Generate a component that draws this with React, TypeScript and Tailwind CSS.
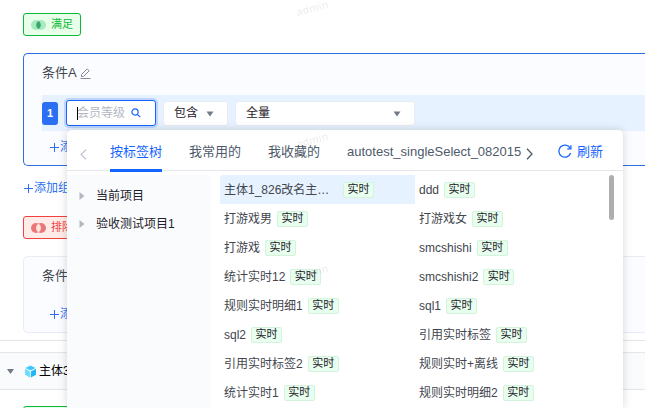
import React from "react";

type Tag = { name: string; wide?: boolean };

const TAGS: Tag[] = [
  { name: "主体1_826改名主…", wide: true },
  { name: "ddd" },
  { name: "打游戏男" },
  { name: "打游戏女" },
  { name: "打游戏" },
  { name: "smcshishi" },
  { name: "统计实时12" },
  { name: "smcshishi2" },
  { name: "规则实时明细1" },
  { name: "sql1" },
  { name: "sql2" },
  { name: "引用实时标签" },
  { name: "引用实时标签2" },
  { name: "规则实时+离线" },
  { name: "统计实时1" },
  { name: "规则实时明细2" },
];

const TABS = ["按标签树", "我常用的", "我收藏的", "autotest_singleSelect_082015"];

function MatchBadge() {
  return (
    <div className="flex h-[23px] w-[58px] items-center gap-[5px] rounded-[3px] border border-[#0cb837] bg-[#e8ffea] pl-[7px] text-[11px] leading-none text-[#0cb837]">
      <svg width="15" height="10" viewBox="0 0 15 10" aria-hidden="true">
        <circle cx="5" cy="5" r="5" fill="#a5ebbd" />
        <circle cx="10" cy="5" r="5" fill="#a5ebbd" />
        <path d="M7.5 0.9a4.8 4.8 0 0 1 0 8.2a4.8 4.8 0 0 1 0-8.2z" fill="#3aa66d" />
      </svg>
      满足
    </div>
  );
}

function ExcludeBadge() {
  return (
    <div className="flex h-[23px] w-[58px] items-center gap-[5px] rounded-[3px] border border-[#f53f3f] bg-[#ffece8] pl-[7px] text-[11px] leading-none text-[#f53f3f]">
      <svg width="15" height="10" viewBox="0 0 15 10" aria-hidden="true">
        <circle cx="5" cy="5" r="5" fill="#ea7878" />
        <circle cx="10" cy="5" r="5" fill="#ea7878" />
        <path d="M7.5 0.7a5 5 0 0 1 0 8.6a5 5 0 0 1 0-8.6z" fill="#ffe3df" />
      </svg>
      排除
    </div>
  );
}

function PlusIcon() {
  return (
    <svg width="11" height="11" viewBox="0 0 11 11" fill="none" stroke="currentColor" aria-hidden="true">
      <path d="M5.5 1v9M1 5.5h9" />
    </svg>
  );
}

function AddButton({ children }: { children: React.ReactNode }) {
  return (
    <button type="button" className="flex h-5 items-center text-xs text-[#2b6ff2]">
      <PlusIcon />
      {children}
    </button>
  );
}

function EditIcon() {
  return (
    <svg width="11" height="11" viewBox="0 0 11 11" fill="none" stroke="#868c99" aria-hidden="true">
      <path d="M0.5 10.5h10" />
      <path d="M1.5 8.5v-2l5.7-5.7l2 2l-5.7 5.7z" strokeLinejoin="round" />
    </svg>
  );
}

function Picker({ label, value, className }: { label: string; value: string; className: string }) {
  return (
    <div className={`relative ${className}`}>
      <select
        aria-label={label}
        defaultValue={value}
        className="h-[25px] w-full appearance-none rounded-[3px] border border-[#e8ebf2] bg-white pl-2.5 text-xs leading-[23px] text-[#1d2129] outline-none"
      >
        <option>{value}</option>
      </select>
      <svg className="pointer-events-none absolute top-[10px] right-[14px]" width="8" height="6" viewBox="0 0 8 6" aria-hidden="true">
        <path d="M0.5 0.5h7L4 5.5z" fill="#737a87" />
      </svg>
    </div>
  );
}

function TreeNode({ children }: { children: React.ReactNode }) {
  return (
    <button type="button" className="flex h-7 w-full items-center gap-[11px] pl-3 text-xs text-[#1d2129]">
      <svg width="6" height="8" viewBox="0 0 6 8" aria-hidden="true">
        <path d="M0.5 0l5 4l-5 4z" fill="#b3b8c2" />
      </svg>
      {children}
    </button>
  );
}

function TagPanel() {
  return (
    <section className="absolute top-[130px] right-[22px] bottom-0 left-[67px] flex flex-col rounded-t-[5px] bg-white shadow-[0_0_10px_rgba(0,0,0,0.16)]">
      <div className="flex h-[41px] items-center border-b border-[#e5e6eb] text-[13px] text-[#4e5969]">
        <button type="button" aria-label="向左" className="w-[43px] pt-2 pl-[13px]">
          <svg width="7" height="11" viewBox="0 0 7 11" fill="none" stroke="#c2c6ce" strokeWidth="1.2" aria-hidden="true">
            <path d="M6 0.7L1 5.5l5 4.8" />
          </svg>
        </button>
        <div role="tablist" className="flex h-full gap-[27px]">
          {TABS.map((tab, i) => (
            <button
              key={tab}
              type="button"
              role="tab"
              aria-selected={i === 0}
              className={
                i === 0
                  ? "h-[42px] border-b-[3px] border-[#1664ff] pt-[5px] whitespace-nowrap text-[#1664ff]"
                  : "h-[42px] border-b-[3px] border-transparent pt-[5px] whitespace-nowrap"
              }
            >
              {tab}
            </button>
          ))}
        </div>
        <button type="button" aria-label="向右" className="pt-2 pl-[5px]">
          <svg width="7" height="12" viewBox="0 0 7 12" fill="none" stroke="#4e5969" strokeWidth="1.3" aria-hidden="true">
            <path d="M1 0.8L6 6l-5 5.2" />
          </svg>
        </button>
        <button type="button" className="mr-5 ml-auto flex items-center gap-[5px] pt-[3px] whitespace-nowrap text-[#1664ff]">
          <svg width="14" height="14" viewBox="0 0 14 14" fill="none" stroke="currentColor" strokeWidth="1.3" aria-hidden="true">
            <path d="M12.6 9A6 6 0 1 1 12.1 4.2" />
            <path d="M12.9 1.2v3.6H9.3" />
          </svg>
          刷新
        </button>
      </div>
      <div className="flex min-h-0 flex-1 gap-[9px] pt-1">
        <nav className="w-[144px] shrink-0 bg-[#fafbfd] pt-[7px]">
          <TreeNode>当前项目</TreeNode>
          <TreeNode>验收测试项目1</TreeNode>
        </nav>
        <div className="relative min-w-0 flex-1 overflow-hidden pr-[13px]">
          <ul className="grid grid-cols-2 text-xs text-[#42464e]">
            {TAGS.map((tag) => (
              <li
                key={tag.name}
                className={
                  tag.wide
                    ? "flex h-[29px] items-center gap-[5px] rounded-tl-[4px] bg-[#e6f2ff] pl-1"
                    : "flex h-[29px] items-center gap-[5px] pl-1"
                }
              >
                <span className={tag.wide ? "w-[114px] whitespace-nowrap" : "whitespace-nowrap"}>{tag.name}</span>
                <span className="flex h-4 w-[31px] items-center justify-center rounded-[2px] border border-[#d3f3dd] bg-[#e8ffef] text-[11px] leading-none text-[#1d2129]">
                  实时
                </span>
              </li>
            ))}
          </ul>
          <div className="absolute top-0 right-[9px] h-[45px] w-[5px] rounded-full bg-[#aeaeae]" />
        </div>
      </div>
    </section>
  );
}

function Watermarks() {
  return (
    <div aria-hidden="true" className="pointer-events-none absolute inset-y-0 left-[296px] flex w-8 flex-col gap-[116px] text-[11px] leading-4 font-bold text-black/7">
      <span className="-rotate-15">admin</span>
      <span className="-rotate-15">admin</span>
      <span className="-rotate-15">admin</span>
    </div>
  );
}

export default function App() {
  return (
    <main
      lang="zh-CN"
      className="relative h-screen overflow-hidden bg-white pt-[13px] font-['Liberation_Sans','Noto_Sans_CJK_SC',sans-serif] text-xs text-[#1d2129]"
    >
      <div className="pl-[23px]">
        <MatchBadge />
        <section className="mt-[17px] rounded-l-[5px] border border-r-0 border-[#2b6fe0] bg-[#fafcff] pt-[9px] pb-2 pl-[18px]">
          <h2 className="flex h-5 items-center gap-[3px] text-[13px] text-[#42464e]">
            条件A
            <button type="button" aria-label="编辑">
              <EditIcon />
            </button>
          </h2>
          <div className="mt-3 flex h-9 items-center gap-[7px] bg-[#e6f2ff]">
            <span className="mr-px flex h-[23px] w-4 items-center justify-center rounded-[3px] bg-[#2b6ff2] text-[11px] font-bold text-white">
              1
            </span>
            <div className="relative flex h-[26px] w-[90px] items-center rounded-[3px] border border-[#1664ff] bg-white ring-2 ring-[#bdd5ff]">
              <input
                type="text"
                aria-label="标签"
                placeholder="会员等级"
                className="h-full w-[61px] pl-2.5 text-xs caret-transparent outline-none placeholder:text-[#b3b8c2]"
              />
              <span className="absolute left-2.5 h-[13px] w-px bg-black" />
              <svg className="ml-[3px]" width="10" height="10" viewBox="0 0 10 10" fill="none" stroke="#1664ff" strokeWidth="1.2" aria-hidden="true">
                <circle cx="4" cy="4" r="3.1" />
                <path d="M6.3 6.3L9.2 9.2" />
              </svg>
            </div>
            <Picker label="关系" value="包含" className="w-[65px]" />
            <Picker label="范围" value="全量" className="w-[180px]" />
          </div>
          <div className="mt-1.5 pl-[7px]">
            <AddButton>添加</AddButton>
          </div>
        </section>
        <div className="mt-3">
          <AddButton>添加组</AddButton>
        </div>
        <div className="mt-[18px]">
          <ExcludeBadge />
        </div>
        <section className="mt-[17px] rounded-l-[5px] border border-r-0 border-[#e8edf5] bg-[#fafcff] pt-[9px] pb-2 pl-[18px]">
          <h2 className="flex h-5 items-center text-[13px] text-[#42464e]">条件</h2>
          <div className="mt-[18px] pl-[7px]">
            <AddButton>添加</AddButton>
          </div>
        </section>
      </div>
      <hr className="mt-[7px] border-[#e5e6eb]" />
      <div className="mt-[11px] flex h-[38px] items-center border-y border-[#e5e6eb] bg-[#fafbfd] pl-[7px]">
        <svg width="7" height="5" viewBox="0 0 7 5" aria-hidden="true">
          <path d="M0 0h7L3.5 5z" fill="#737a87" />
        </svg>
        <svg className="ml-[10px]" width="13" height="13" viewBox="0 0 13 13" aria-hidden="true">
          <path d="M6.5 0.5L11.6 3L6.5 5.6L1.4 3z" fill="#3fc8fa" />
          <path d="M1 3.8L6.1 6.4v6L1 9.8z" fill="#6fdcff" />
          <path d="M12 3.8L6.9 6.4v6L12 9.8z" fill="#22b8f5" />
        </svg>
        <span className="ml-[2px] text-black">主体3</span>
      </div>
      <div className="mt-4 pl-[23px]">
        <MatchBadge />
      </div>
      <TagPanel />
      <Watermarks />
    </main>
  );
}
